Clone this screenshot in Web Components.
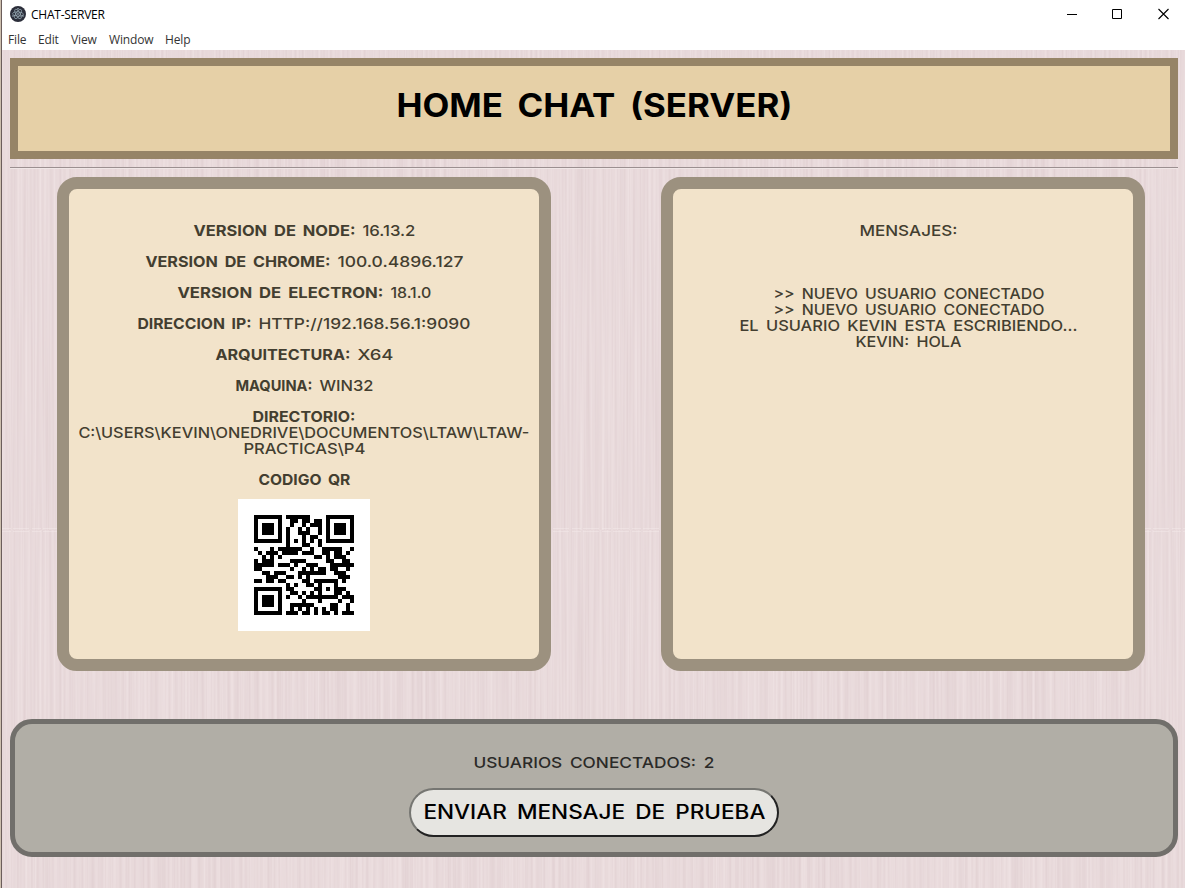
<!DOCTYPE html>
<html lang="es">
<head>
<meta charset="utf-8">
<title>CHAT-SERVER</title>
<style>
html,body{margin:0;height:100%;overflow:hidden;background:#e8dadb}
</style>
</head>
<body>
<chat-window></chat-window>

<template id="window-tpl">
<style>
:host{display:flex;flex-direction:column;box-sizing:border-box;width:1185px;height:888px;border-left:1px solid #cdbfae;box-shadow:inset 1px 0 #6b5d5b;font-family:Inter,"Noto Sans",sans-serif;overflow:hidden;position:relative}
title-bar{flex:none}
.page{flex:1;position:relative;isolation:isolate;display:flex;flex-direction:column;margin-left:1px;padding:8px 0 0 8px}
wood-grain{position:absolute;inset:0;z-index:-1}
page-header,user-footer{width:1168px;box-sizing:border-box}
hr{width:1168px;box-sizing:border-box;height:2px;margin:8px 0;border:0;border-top:1px solid #9b8f90;border-bottom:1px solid #f0e6e6}
.cols{display:flex;gap:110px;padding-left:47px;margin-bottom:48px}
info-panel:first-child{width:494px}
info-panel:last-child{width:484px}
.space{height:32px}
.shift{padding-left:11px;width:100%;box-sizing:border-box;display:flex;flex-direction:column;align-items:center}
qr-code{margin-top:-4px}
</style>
<title-bar></title-bar>
<div class="page">
<wood-grain></wood-grain>
<page-header><fit-text w="395">HOME CHAT (SERVER)</fit-text></page-header>
<hr>
<div class="cols">
<info-panel>
<info-row><fit-text bold w="161">VERSION DE NODE:</fit-text><fit-text w="52">16.13.2</fit-text></info-row>
<info-row><fit-text bold w="184">VERSION DE CHROME:</fit-text><fit-text w="125">100.0.4896.127</fit-text></info-row>
<info-row><fit-text bold w="205">VERSION DE ELECTRON:</fit-text><fit-text w="40">18.1.0</fit-text></info-row>
<info-row><fit-text bold w="113">DIRECCION IP:</fit-text><fit-text w="211">HTTP://192.168.56.1:9090</fit-text></info-row>
<info-row><fit-text bold w="134">ARQUITECTURA:</fit-text><fit-text w="35">X64</fit-text></info-row>
<info-row><fit-text bold w="76">MAQUINA:</fit-text><fit-text w="53">WIN32</fit-text></info-row>
<info-row stacked><fit-text bold w="102">DIRECTORIO:</fit-text><fit-text w="450">C:\USERS\KEVIN\ONEDRIVE\DOCUMENTOS\LTAW\LTAW-</fit-text><fit-text w="121">PRACTICAS\P4</fit-text></info-row>
<info-row><fit-text bold w="91">CODIGO QR</fit-text></info-row>
<qr-code></qr-code>
</info-panel>
<info-panel>
<div class="shift">
<info-row><fit-text w="97">MENSAJES:</fit-text></info-row>
<div class="space"></div>
<info-row stacked>
<fit-text w="270">&gt;&gt; NUEVO USUARIO CONECTADO</fit-text>
<fit-text w="270">&gt;&gt; NUEVO USUARIO CONECTADO</fit-text>
<fit-text w="337">EL USUARIO KEVIN ESTA ESCRIBIENDO...</fit-text>
<fit-text w="105">KEVIN: HOLA</fit-text>
</info-row>
</div>
</info-panel>
</div>
<user-footer>
<fit-text slot="count" w="240">USUARIOS CONECTADOS: 2</fit-text>
<fit-text slot="action" w="341">ENVIAR MENSAJE DE PRUEBA</fit-text>
</user-footer>
</div>
</template>

<script>
const shadow=(el,html)=>{const r=el.attachShadow({mode:'open'});r.innerHTML=html;return r};

/* One line of text stretched horizontally to a given width. */
class FitText extends HTMLElement{
  connectedCallback(){
    if(this.shadowRoot)return;
    const w=+this.getAttribute('w');
    const r=shadow(this,`<style>
      :host{display:block;width:${w}px;white-space:pre;text-align:left;flex:none}
      :host([bold]){font-weight:700}
      span{display:inline-block;transform-origin:0 50%;vertical-align:top;word-spacing:.18em}
    </style><span><slot></slot></span>`);
    const s=r.querySelector('span');
    const n=s.getBoundingClientRect().width;
    if(n)s.style.transform=`translateX(-.6px) scaleX(${(w+1)/n})`;
  }
}

class TitleBar extends HTMLElement{
  connectedCallback(){shadow(this,`<style>
    :host{display:block;height:50px;background:#fff;margin-left:1px;font-family:"Open Sans","Noto Sans",sans-serif;font-size:12px;color:#000}
    .top{display:flex;height:28px;align-items:center;padding-left:8px}
    .top b{font-weight:400;margin-left:5px;letter-spacing:-.24px;flex:1}
    .menu{display:flex;height:22px;align-items:center;padding:1px 0 0 6px;color:#333;line-height:20px;letter-spacing:-.15px;box-sizing:border-box}
    .menu span{box-sizing:border-box;white-space:nowrap;position:relative;top:.5px}
    svg{display:block}
    .ctl{margin-right:16px}
  </style>
  <div class="top">
    <svg width="16" height="16" viewBox="0 0 16 16"><circle cx="8" cy="8" r="8" fill="#2b2e3a"/><g fill="none" stroke="#a9bfc9" stroke-width=".6"><ellipse cx="8" cy="8" rx="5.4" ry="2.1" transform="rotate(2 8 8)"/><ellipse cx="8" cy="8" rx="5.4" ry="2.1" transform="rotate(62 8 8)"/><ellipse cx="8" cy="8" rx="5.4" ry="2.1" transform="rotate(122 8 8)"/></g><g fill="#b9d0da"><circle cx="8" cy="8" r=".8"/><circle cx="3" cy="10" r=".7"/><circle cx="13" cy="10" r=".7"/><circle cx="8" cy="2.6" r=".7"/></g></svg>
    <b>CHAT-SERVER</b>
    <svg class="ctl" width="102" height="12" viewBox="0 0 102 12" fill="none" stroke="#000"><path d="M0 6.500h10M45.500 1.500h9v9h-9z"/><path d="M91.500 1l10 10M101.500 1l-10 10" stroke-width="1.1"/></svg>
  </div>
  <div class="menu"><span style="width:30px">File</span><span style="width:33px">Edit</span><span style="width:38px">View</span><span style="width:56px">Window</span><span>Help</span></div>`)}
}

class PageHeader extends HTMLElement{
  connectedCallback(){shadow(this,`<style>
    :host{display:flex;justify-content:center;height:101px;border:8px solid #968467;background:#e6d0a7;color:#000;font-size:32px;font-weight:700;line-height:38px;padding-top:21px}
  </style><slot></slot>`)}
}

class InfoPanel extends HTMLElement{
  connectedCallback(){shadow(this,`<style>
    :host{display:flex;flex-direction:column;align-items:center;box-sizing:border-box;height:494px;border:12px solid #9c917f;border-radius:20px;background:#f2e3ca;color:#433e30;font-size:15px;font-weight:500;line-height:16px;padding-top:34px}
  </style><slot></slot>`)}
}

class InfoRow extends HTMLElement{
  connectedCallback(){shadow(this,`<style>
    :host{display:flex;justify-content:center;gap:8px;margin-bottom:15px}
    :host([stacked]){flex-direction:column;align-items:center;gap:0}
  </style><slot></slot>`)}
}

class UserFooter extends HTMLElement{
  connectedCallback(){shadow(this,`<style>
    :host{display:flex;flex-direction:column;align-items:center;height:138px;border:5px solid #716f6b;border-radius:22px;background:#b1aea6;color:#2b2a28;font-size:15px;font-weight:500;line-height:16px;padding-top:31px}
    button{box-sizing:border-box;width:370px;height:49px;margin:17px 0 0;padding:0 0 2px;display:flex;align-items:center;justify-content:center;border:2px solid;border-color:#767672 #222 #222 #767672;border-radius:25px;background:#e6e5e1;color:#000;font:500 19.5px/24px Inter,sans-serif}
  </style><slot name="count"></slot><button><slot name="action"></slot></button>`)}
}

/* Fine vertical grain with a faint horizontal seam between two tiles. */
class WoodGrain extends HTMLElement{
  connectedCallback(){shadow(this,`<style>
    :host{display:block;background:#e8dadb;overflow:hidden}
    svg{display:block;width:100%;height:100%}
  </style><svg>
    <filter id="g" x="0" y="0" width="100%" height="100%" color-interpolation-filters="sRGB"><feTurbulence type="fractalNoise" baseFrequency=".42 .004" numOctaves="2" seed="7"/><feColorMatrix values=".07 0 0 0 .875  .09 0 0 0 .807  .085 0 0 0 .815  0 0 0 0 1"/></filter>
    <rect width="100%" height="480" filter="url(#g)"/>
    <svg y="480" height="480" width="100%"><rect width="100%" height="480" filter="url(#g)"/></svg>
    <path d="M0 478.500H1185M0 481.500H1185" stroke="#f4eaea" stroke-opacity=".5" stroke-dasharray="9 2 16 3"/>
  </svg>`)}
}

/* QR symbol, version 2-M: "http" as bytes, the rest as alphanumeric. */
class QrCode extends HTMLElement{
  connectedCallback(){
    let bits='';const put=(v,n)=>bits+=v.toString(2).padStart(n,'0');
    const AL='0123456789ABCDEFGHIJKLMNOPQRSTUVWXYZ $%*+-./:';
    put(4,4);put(4,8);for(const c of 'http')put(c.charCodeAt(0),8);
    const s='://192.168.56.1:9090';put(2,4);put(s.length,9);
    for(let i=0;i<s.length;i+=2)put(AL.indexOf(s[i])*45+AL.indexOf(s[i+1]),11);
    put(0,4);while(bits.length%8)bits+='0';
    const d=bits.match(/.{8}/g).map(b=>parseInt(b,2));for(let p=236;d.length<28;p^=253)d.push(p);
    const mul=(a,b)=>{let z=0;for(let i=7;i>=0;i--){z=(z<<1)^((z>>>7)*0x11d);z^=((b>>>i)&1)*a}return z};
    const g=Array(16).fill(0);g[15]=1;let root=1;
    for(let i=0;i<16;i++){for(let j=0;j<16;j++){g[j]=mul(g[j],root);if(j<15)g[j]^=g[j+1]}root=mul(root,2)}
    const e=Array(16).fill(0);for(const b of d){const f=b^e.shift();e.push(0);g.forEach((c,i)=>e[i]^=mul(c,f))}
    const all=[...d,...e].map(b=>b.toString(2).padStart(8,'0')).join('');
    const N=25,mask=4,m=[...Array(N)].map(()=>Array(N).fill(null));
    const set=(x,y,v)=>{if(x>=0&&y>=0&&x<N&&y<N)m[y][x]=v?1:0};
    for(let i=0;i<N;i++){set(6,i,i%2==0);set(i,6,i%2==0)}
    for(const[cx,cy]of[[3,3],[21,3],[3,21]])for(let y=-4;y<5;y++)for(let x=-4;x<5;x++){const k=Math.max(Math.abs(x),Math.abs(y));set(cx+x,cy+y,k!=2&&k!=4)}
    for(let y=-2;y<3;y++)for(let x=-2;x<3;x++)set(18+x,18+y,Math.max(Math.abs(x),Math.abs(y))!=1);
    let rem=mask;for(let i=0;i<10;i++)rem=(rem<<1)^((rem>>>9)*0x537);
    const f=((mask<<10)|rem)^0x5412,F=i=>(f>>>i)&1;
    for(let i=0;i<6;i++)set(8,i,F(i));set(8,7,F(6));set(8,8,F(7));set(7,8,F(8));for(let i=9;i<15;i++)set(14-i,8,F(i));
    for(let i=0;i<8;i++)set(N-1-i,8,F(i));for(let i=8;i<15;i++)set(8,N-15+i,F(i));set(8,N-8,1);
    let k=0;
    for(let R=N-1;R>=1;R-=2){if(R==6)R=5;for(let v=0;v<N;v++)for(let j=0;j<2;j++){
      const x=R-j,y=((R+1)&2)==0?N-1-v:v;
      if(m[y][x]===null)m[y][x]=(+(all[k++]||0))^(((x/3|0)+(y/2|0))%2==0?1:0)}}
    let p='';m.forEach((row,y)=>row.forEach((v,x)=>{if(v)p+=`M${x} ${y}h1v1h-1z`}));
    shadow(this,`<style>:host{display:block;background:#fff;padding:16px;width:100px;height:100px}svg{display:block}</style><svg width="100" height="100" viewBox="0 0 25 25" shape-rendering="crispEdges"><path d="${p}"/></svg>`);
  }
}

class ChatWindow extends HTMLElement{
  connectedCallback(){
    this.attachShadow({mode:'open'}).append(document.getElementById('window-tpl').content.cloneNode(true));
  }
}

customElements.define('title-bar',TitleBar);
customElements.define('page-header',PageHeader);
customElements.define('info-panel',InfoPanel);
customElements.define('info-row',InfoRow);
customElements.define('user-footer',UserFooter);
customElements.define('wood-grain',WoodGrain);
customElements.define('qr-code',QrCode);
customElements.define('chat-window',ChatWindow);
customElements.define('fit-text',FitText);
</script>
</body>
</html>
